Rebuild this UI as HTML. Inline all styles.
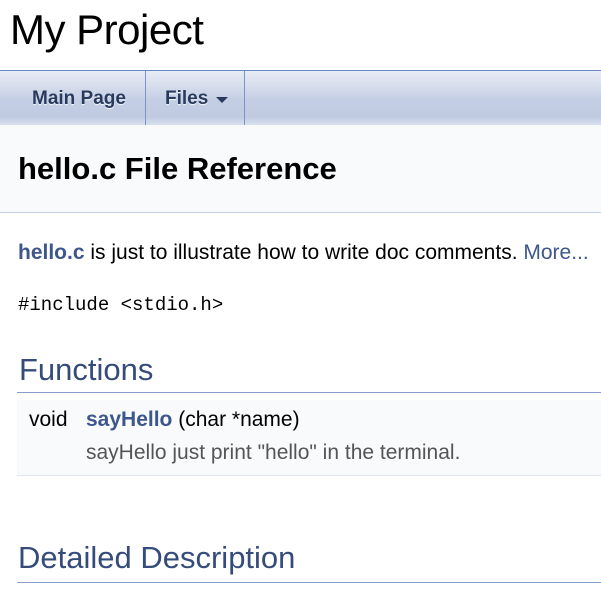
<!DOCTYPE html>
<html><head><meta charset="utf-8"><style>
body{margin:0;width:601px;height:605px;overflow:hidden;background:#fff;font-family:"Liberation Sans",Arial,sans-serif;position:relative}
.a{position:absolute;white-space:nowrap}
#nav{position:absolute;left:0;top:70px;width:601px;height:55px;border-top:1px solid #6b86c4;box-sizing:border-box;background:linear-gradient(#e8ecf5 0%,#d5dcec 30%,#c3cee4 55%,#c0cbe2 85%,#d9e0ee 100%)}
.sep{position:absolute;top:0;width:1px;height:54px;background:#7b93c8}
.nv{position:absolute;top:17px;font-weight:bold;font-size:19px;color:#283a5d;text-shadow:0 1px 1px rgba(255,255,255,.9)}
#hdr{position:absolute;left:0;top:125px;width:601px;height:87px;background:#f9fafc;border-bottom:1px solid #c4cfe5}
.h2{font-size:31px;color:#354c7b}
.line{position:absolute;left:17px;width:584px;height:1px;background:#879ecb}
</style></head><body>
<div class="a" style="left:10px;top:6px;font-size:42px;color:#000;letter-spacing:-0.5px">My Project</div>
<div id="nav">
<div class="nv" style="left:32px">Main Page</div>
<div class="sep" style="left:145px"></div>
<div class="nv" style="left:165px">Files</div>
<div style="position:absolute;left:216px;top:26px;width:0;height:0;border-left:6px solid transparent;border-right:6px solid transparent;border-top:6px solid #283a5d"></div>
<div class="sep" style="left:244px"></div>
</div>
<div id="hdr"><div class="a" style="left:18px;top:26px;font-size:31px;font-weight:bold;color:#000">hello.c File Reference</div></div>
<div class="a" style="left:18px;top:241px;font-size:21px;color:#000"><b style="color:#3d578c">hello.c</b> is just to illustrate how to write doc comments. <span style="color:#3d578c">More...</span></div>
<div class="a" style="left:18px;top:294px;font-size:19px;font-family:'Liberation Mono',monospace;color:#000">#include &lt;stdio.h&gt;</div>
<div class="a h2" style="left:19px;top:352px">Functions</div>
<div class="line" style="top:392px"></div>
<div style="position:absolute;left:17px;top:400px;width:584px;height:75px;background:#f9fafc;border-bottom:1px solid #dee4f0"></div>
<div class="a" style="left:29px;top:408px;font-size:21px;color:#000">void</div>
<div class="a" style="left:86px;top:408px;font-size:21px;color:#000"><b style="color:#3d578c">sayHello</b> (char *name)</div>
<div class="a" style="left:86px;top:441px;font-size:21px;color:#555">sayHello just print "hello" in the terminal.</div>
<div class="a h2" style="left:18px;top:540px">Detailed Description</div>
<div class="line" style="top:582px"></div>
</body></html>
